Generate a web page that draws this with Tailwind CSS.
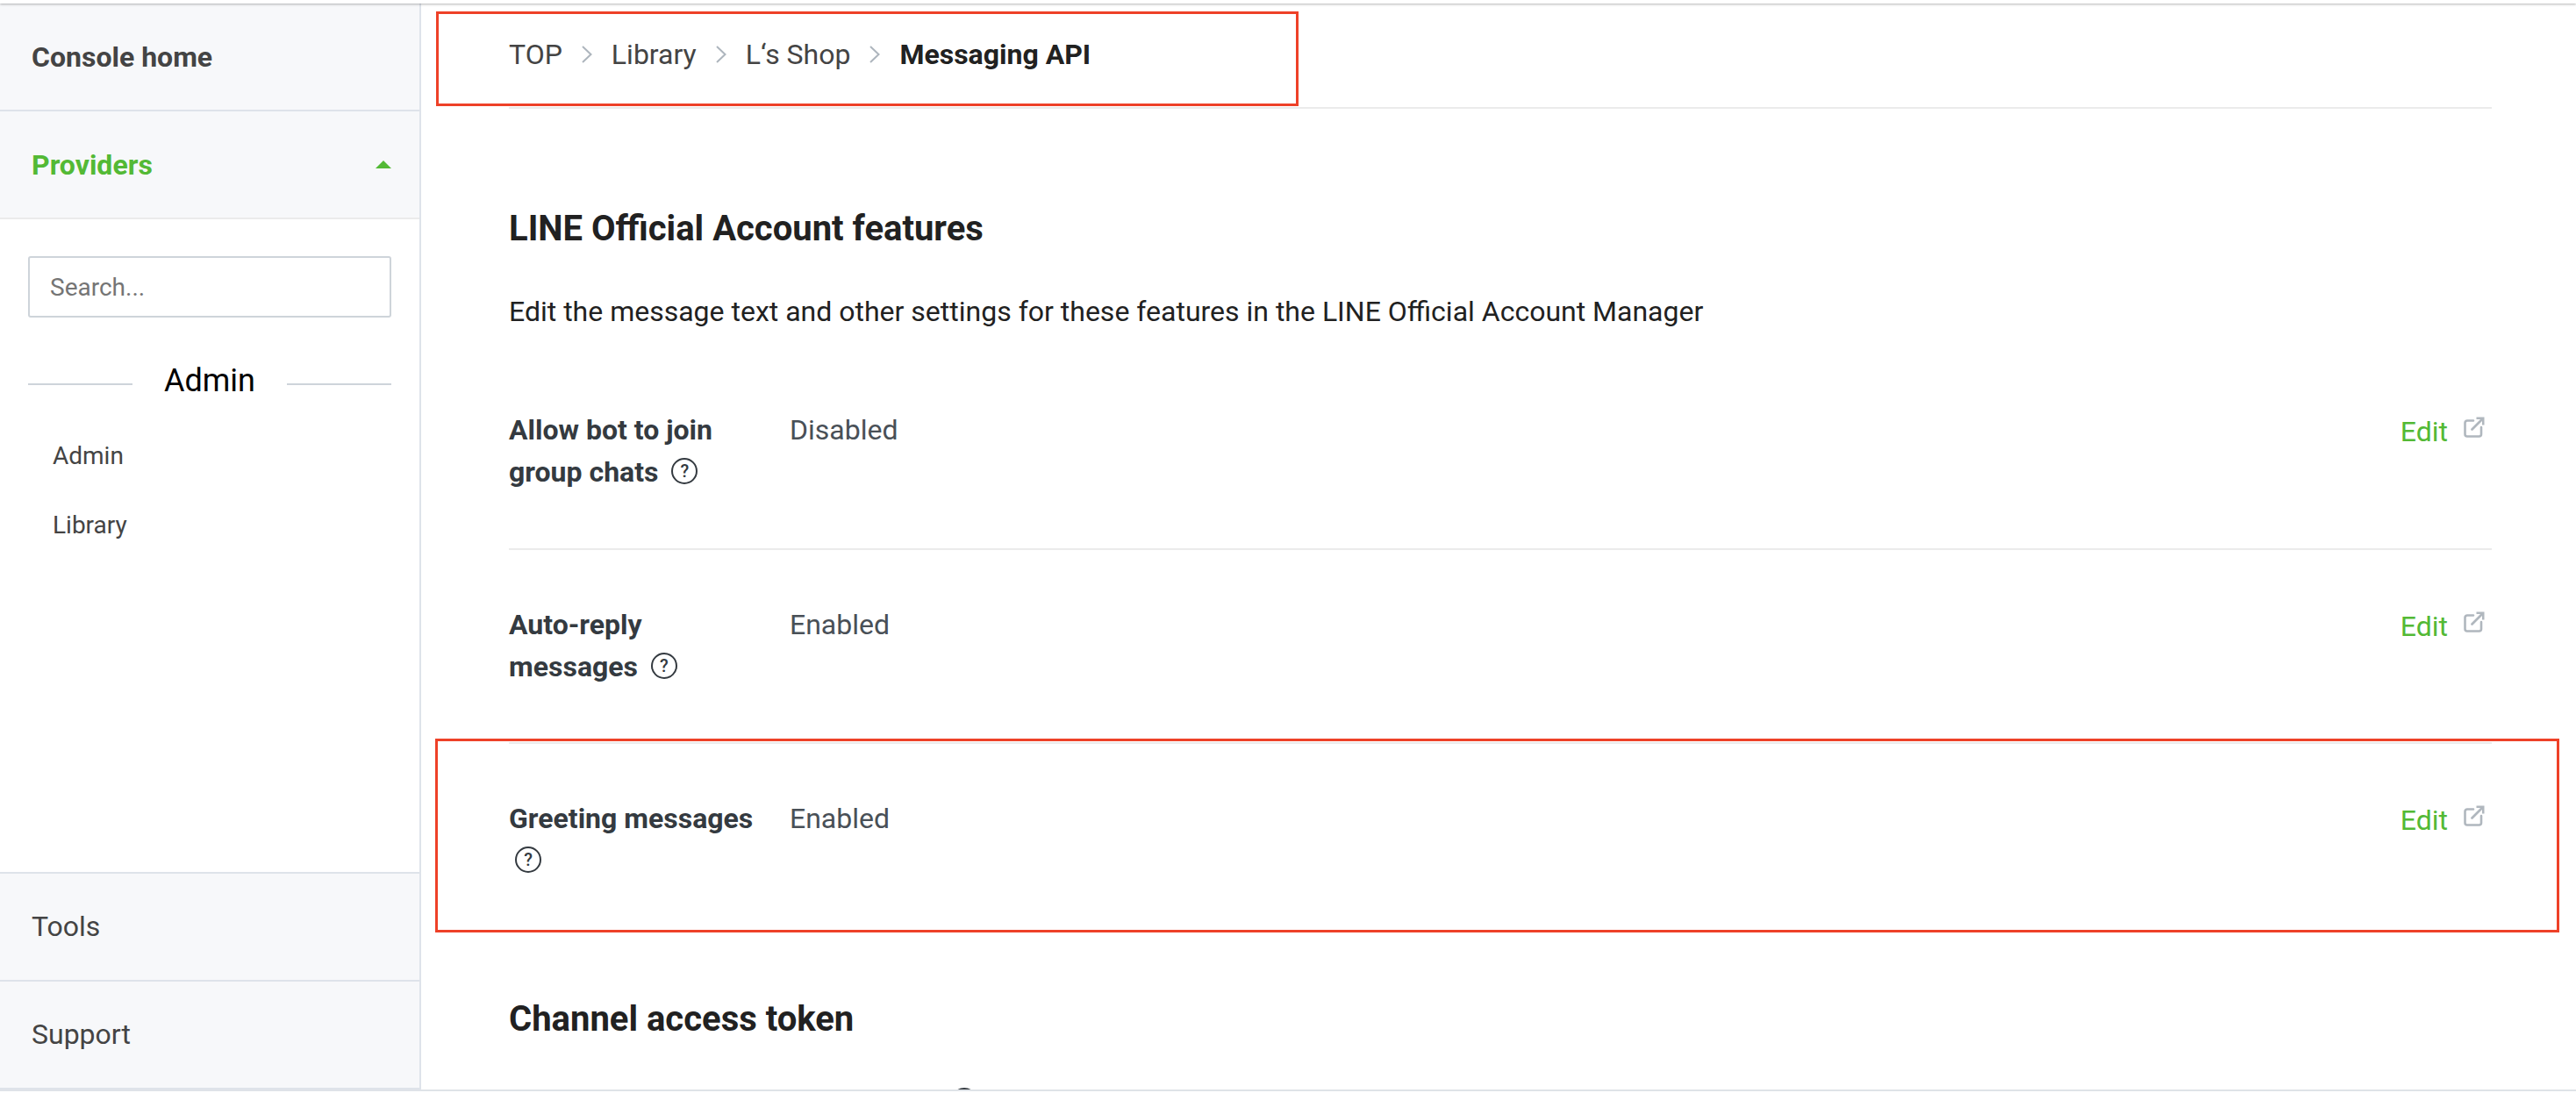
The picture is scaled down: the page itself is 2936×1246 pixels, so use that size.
<!DOCTYPE html>
<html lang="en">
<head>
<meta charset="utf-8">
<title>Messaging API</title>
<script src="https://cdn.jsdelivr.net/npm/@tailwindcss/browser@4"></script>
</head>
<body class="flex h-screen flex-col overflow-hidden bg-white pb-[2px] font-['Roboto',sans-serif] text-[32px] leading-[48px] text-[#212121]">
<svg class="hidden" aria-hidden="true">
  <symbol id="chevron" viewBox="0 0 12 20"><path d="M1 1l9.500 9L1 19" fill="none" stroke="#adb5bd" stroke-width="2"/></symbol>
  <symbol id="external" viewBox="0 0 24 24">
    <path d="M11 4.500H4A2.500 2.500 0 0 0 1.500 7v13A2.500 2.500 0 0 0 4 22.500h13.500A2.500 2.500 0 0 0 20 20v-8" fill="none" stroke="#b0b7be" stroke-width="2.600" stroke-linecap="round"/>
    <path d="M9.500 14.500L20 4" fill="none" stroke="#b0b7be" stroke-width="2.800" stroke-linecap="round"/>
    <path d="M14.500 .5H23.500V9.500H21V3H14.500z" fill="#b0b7be"/>
  </symbol>
</svg>
<header class="relative z-10 h-1 shrink-0 bg-white shadow-[0_1px_3px_rgba(0,0,0,0.3)]"></header>
<div class="flex min-h-0 flex-1 border-b-2 border-[#dfe3e8]">
  <aside class="flex w-[480px] shrink-0 flex-col border-r-2 border-[#dee3ea] text-[#444]">
    <a href="#" class="flex h-[123px] items-center border-b-2 border-[#dee3ea] bg-[#f7f8fa] pl-9 font-bold">Console home</a>
    <button type="button" class="flex h-[123px] items-center justify-between border-b-2 border-[#ebebeb] bg-[#f7f8fa] pr-8 pl-9 font-bold text-[#53b935]">Providers
      <svg class="h-[9px] w-[18px]" viewBox="0 0 18 9"><path d="M0 9l9-9 9 9z" fill="#53b935"/></svg>
    </button>
    <div class="px-8 pt-[42px]">
      <input type="text" placeholder="Search..." aria-label="Search providers" class="block h-[70px] w-full rounded-[3px] border-2 border-[#ced4da] px-[23px] text-[28px] placeholder:text-[#757575]">
      <h2 class="mt-12 flex items-center gap-9 text-[36px] text-black before:mt-2 before:h-[2px] before:flex-1 before:bg-[#ced4da] after:mt-2 after:h-[2px] after:flex-1 after:bg-[#ced4da]">Admin</h2>
      <ul class="mt-[38px] flex flex-col gap-[31px] pl-7 text-[28px]">
        <li><a href="#" class="block">Admin</a></li>
        <li><a href="#" class="block">Library</a></li>
      </ul>
    </div>
    <nav class="mt-auto">
      <a href="#" class="flex h-[123px] items-center border-t-2 border-[#dee3ea] bg-[#f7f8fa] pb-[2px] pl-9">Tools</a>
      <a href="#" class="flex h-[125px] items-center border-y-2 border-[#dee3ea] bg-[#f7f8fa] pb-[2px] pl-9">Support</a>
    </nav>
  </aside>
  <main class="min-w-0 flex-1 overflow-hidden pr-24 pl-[100px]">
    <nav aria-label="Breadcrumb" class="relative h-[120px] border-b-2 border-[#ebebeb] pt-[34px]">
      <ol class="flex items-center gap-[22px] text-[#444]">
        <li><a href="#">TOP</a></li>
        <li><svg class="h-5 w-3"><use href="#chevron"/></svg></li>
        <li><a href="#">Library</a></li>
        <li><svg class="h-5 w-3"><use href="#chevron"/></svg></li>
        <li><a href="#">L‘s Shop</a></li>
        <li><svg class="h-5 w-3"><use href="#chevron"/></svg></li>
        <li class="font-bold text-[#212121]" aria-current="page">Messaging API</li>
      </ol>
      <div class="pointer-events-none absolute top-[9px] -left-[83px] h-[108px] w-[983px] border-3 border-[#ee4128]"></div>
    </nav>
    <section>
      <h1 class="mt-[113px] text-[40px] font-bold">LINE Official Account features</h1>
      <p class="mt-[46px]">Edit the message text and other settings for these features in the LINE Official Account Manager</p>
      <dl class="mt-[27px]">
        <div class="flex border-b-2 border-[#ebebeb] pt-[60px] pb-[63px]">
          <dt class="w-[320px] shrink-0 font-bold text-[#343a40]"><span class="block w-[290px]">Allow bot to join group chats <button type="button" aria-label="Help" class="ml-[7px] inline-flex size-[30px] items-center justify-center rounded-full border-2 border-[#343a40] align-[5px] text-[20px] leading-none font-medium">?</button></span></dt>
          <dd class="flex-1 text-[#495057]">Disabled</dd>
          <dd><a href="#" class="flex gap-[18px] pt-[2px] pr-2 text-[#53b935]">Edit<svg class="mt-[7px] size-6"><use href="#external"/></svg></a></dd>
        </div>
        <div class="flex border-b-2 border-[#ebebeb] pt-[61px] pb-[62px]">
          <dt class="w-[320px] shrink-0 font-bold text-[#343a40]"><span class="block w-[290px]">Auto-reply<br>messages <button type="button" aria-label="Help" class="ml-[7px] inline-flex size-[30px] items-center justify-center rounded-full border-2 border-[#343a40] align-[5px] text-[20px] leading-none font-medium">?</button></span></dt>
          <dd class="flex-1 text-[#495057]">Enabled</dd>
          <dd><a href="#" class="flex gap-[18px] pt-[2px] pr-2 text-[#53b935]">Edit<svg class="mt-[7px] size-6"><use href="#external"/></svg></a></dd>
        </div>
        <div class="relative flex pt-[61px] pb-[62px]">
          <dt class="w-[320px] shrink-0 font-bold text-[#343a40]"><span class="block w-[290px]">Greeting messages <button type="button" aria-label="Help" class="ml-[7px] inline-flex size-[30px] items-center justify-center rounded-full border-2 border-[#343a40] align-[5px] text-[20px] leading-none font-medium">?</button></span></dt>
          <dd class="flex-1 text-[#495057]">Enabled</dd>
          <dd><a href="#" class="flex gap-[18px] pt-[2px] pr-2 text-[#53b935]">Edit<svg class="mt-[7px] size-6"><use href="#external"/></svg></a></dd>
          <div class="pointer-events-none absolute -top-[6px] -right-[77px] bottom-1 -left-[84px] border-3 border-[#ee4128]"></div>
        </div>
      </dl>
    </section>
    <section>
      <h1 class="mt-[71px] text-[40px] font-bold">Channel access token</h1>
      <p class="mt-[46px] font-bold whitespace-nowrap text-[#343a40]">Channel access token (long-lived) <button type="button" aria-label="Help" class="ml-[7px] inline-flex size-[30px] items-center justify-center rounded-full border-2 border-[#343a40] align-[5px] text-[20px] leading-none font-medium">?</button></p>
    </section>
  </main>
</div>
</body>
</html>
